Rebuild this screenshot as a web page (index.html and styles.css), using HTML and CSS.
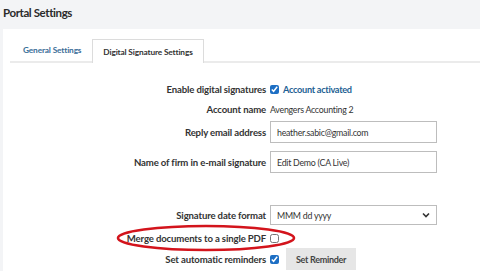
FILE: index.html
```html
<!DOCTYPE html>
<html lang="en">
<head>
  <meta charset="UTF-8" />
  <meta name="viewport" content="width=device-width, initial-scale=1.0"/>
  <title>Portal Settings</title>
  <link rel="stylesheet" href="styles.css">
</head>
<body>
<header class="page-header">
  <h1>Portal Settings</h1>
</header>

<main class="card">
  <nav class="tabs">
    <a class="tab" href="#">General Settings</a>
    <a class="tab active" href="#">Digital Signature Settings</a>
  </nav>

  <form class="settings">
    <div class="field">
      <label class="field-label" for="enableSig">Enable digital signatures</label>
      <div class="field-control">
        <input type="checkbox" id="enableSig" checked />
        <span class="status">Account activated</span>
      </div>
    </div>
    <div class="field">
      <span class="field-label">Account name</span>
      <div class="field-control">
        <span class="value">Avengers Accounting 2</span>
      </div>
    </div>
    <div class="field field--input field--tight">
      <label class="field-label" for="replyEmail">Reply email address</label>
      <div class="field-control">
        <input type="text" id="replyEmail" value="heather.sabic@gmail.com" />
      </div>
    </div>
    <div class="field field--input">
      <label class="field-label" for="firmName">Name of firm in e-mail signature</label>
      <div class="field-control">
        <input type="text" id="firmName" value="Edit Demo (CA Live)" />
      </div>
    </div>
    <div class="field field--section">
      <label class="field-label" for="dateFormat">Signature date format</label>
      <div class="field-control">
        <div class="select" id="dateFormat">
          <span>MMM dd yyyy</span>
          <svg width="8" height="6" viewBox="0 0 8 6"><path d="M1 1.5 L4 4.5 L7 1.5" fill="none" stroke="#333" stroke-width="1.6"/></svg>
        </div>
      </div>
    </div>
    <div class="field field--after-select">
      <label class="field-label" for="mergePdf">Merge documents to a single PDF</label>
      <div class="field-control">
        <input type="checkbox" id="mergePdf" />
      </div>
    </div>
    <div class="field field--input field--flush">
      <label class="field-label" for="reminders">Set automatic reminders</label>
      <div class="field-control">
        <input type="checkbox" id="reminders" checked />
        <button type="button" class="btn">Set Reminder</button>
      </div>
    </div>
  </form>

  <!-- annotation drawn over the merge row -->
  <svg class="highlight" width="186" height="30" viewBox="0 0 186 30">
    <ellipse cx="92" cy="15" rx="88" ry="12" fill="none" stroke="#d3141c" stroke-width="2.6"/>
  </svg>
</main>
</body>
</html>
```

FILE: styles.css
```css
body {
  font-family: 'Lato', 'Liberation Sans', sans-serif;
  margin: 0;
  padding: 0;
  background-color: #f3f4f6;
  color: #333;
  height: 271px;
  overflow: hidden;
}

.page-header {
  height: 29px;
  padding-left: 3px;
  box-sizing: border-box;
}

.page-header h1 {
  margin: 0;
  padding-top: 6px;
  font-size: 11.5px;
  letter-spacing: -0.4px;
  font-weight: bold;
  color: #2b2b2b;
}

.card {
  position: relative;
  background-color: #fff;
  margin-left: 3px;
  height: 242px;
  padding-top: 10px;
  box-sizing: border-box;
}

.tabs {
  display: flex;
  margin-left: 7px;
  border-bottom: 2px solid #ebebeb;
  height: 22px;
}

.tab {
  display: flex;
  align-items: center;
  padding: 0 11px 0 13px;
  font-size: 8.3px;
  letter-spacing: -0.15px;
  font-weight: bold;
  color: #3a6e98;
  text-decoration: none;
}

.tab.active {
  color: #333;
  background-color: #fff;
  border: 1px solid #dcdcdc;
  border-bottom: none;
  margin-bottom: -2px;
  padding: 0 10px;
}

.settings {
  padding-top: 16px;
}

.field {
  display: flex;
  align-items: center;
  height: 20px;
  font-size: 9.6px;
}

.field--input {
  height: 22px;
  margin-top: 8px;
}

.field--tight {
  margin-top: 2px;
}

.field--section {
  margin-top: 32px;
}

.field--after-select {
  margin-top: 3px;
}

.field--flush {
  margin-top: 0;
}

.field-label {
  width: 267px;
  padding-right: 4px;
  box-sizing: border-box;
  text-align: right;
  font-weight: bold;
  letter-spacing: -0.15px;
  color: #333;
}

.field-control {
  display: flex;
  align-items: center;
}

input[type="checkbox"] {
  width: 9px;
  height: 9px;
  margin: 0 4px 0 0;
  accent-color: #1d6fc4;
}

.status {
  font-size: 9.2px;
  letter-spacing: -0.3px;
  font-weight: bold;
  color: #1d5f93;
}

.value {
  font-size: 8.8px;
  letter-spacing: -0.25px;
  color: #333;
}

input[type="text"],
.select {
  width: 167px;
  height: 22px;
  padding: 0 6px;
  box-sizing: border-box;
  border: 1px solid #bdbdbd;
  font-family: inherit;
  font-size: 8.8px;
  letter-spacing: -0.25px;
  color: #333;
}

.select {
  height: 20px;
  display: flex;
  align-items: center;
  justify-content: space-between;
}

.btn {
  margin-left: 3px;
  height: 22px;
  padding: 0 10px;
  background-color: #e6e6e6;
  border: none;
  font-family: inherit;
  font-size: 9px;
  letter-spacing: -0.3px;
  font-weight: bold;
  color: #444;
}

.highlight {
  position: absolute;
  left: 111px;
  top: 194px;
}
```
